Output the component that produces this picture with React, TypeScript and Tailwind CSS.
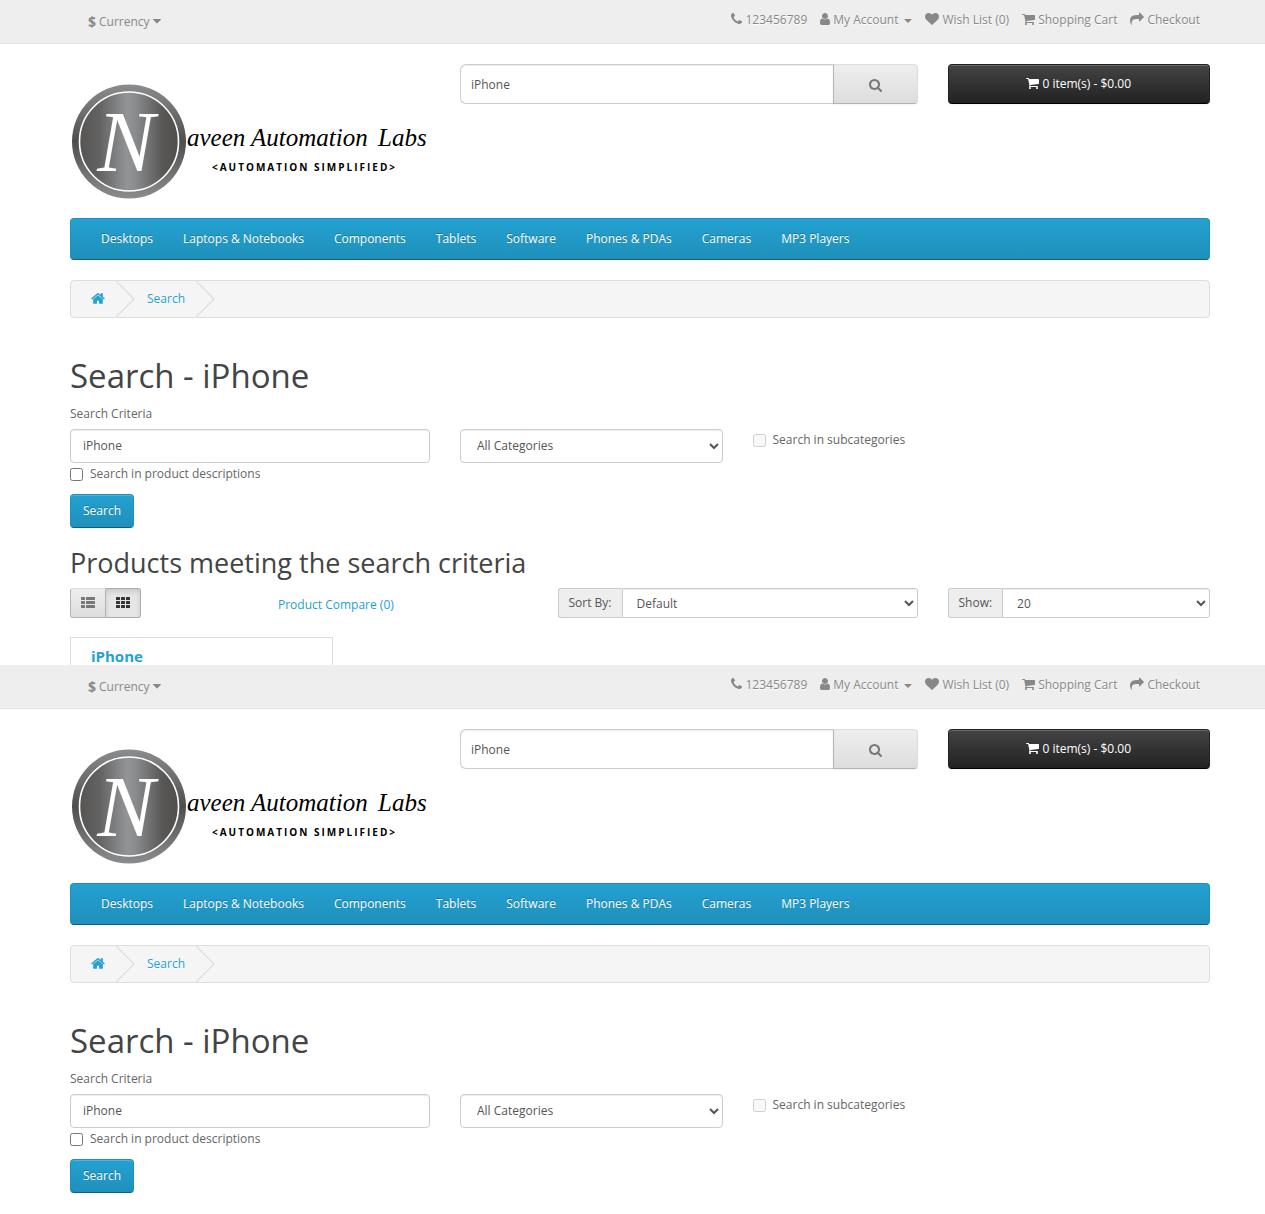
import React, { useId } from "react";

const ICONS = {
  phone: {
    x: 192,
    w: 1408,
    size: "h-[14px] w-[11px]",
    d: "M1600 1240q0 27-10 70.5t-21 68.5q-21 50-122 106-94 51-186 51-27 0-52.5-3.5t-57.5-12.5-47.5-14.5-55.5-20.5-49-18q-98-35-175-83-128-79-264.5-215.5t-215.5-264.5q-48-77-83-175-3-9-18-49t-20.5-55.5-14.5-47.5-12.5-57.5-3.5-52.5q0-92 51-186 56-101 106-122 25-11 68.5-21t70.5-10q14 0 21 3 18 6 53 76 11 19 30 54t35 63.5 31 53.5q3 4 17.5 25t21.5 35.5 7 28.5q0 20-28.5 50t-62 55-62 53-28.5 46q0 9 5 22.5t8.5 20.5 14 24 11.5 19q76 137 174 235t235 174q2 1 19 11.5t24 14 20.5 8.5 22.5 5q18 0 46-28.5t53-62 55-62 50-28.5q14 0 28.5 7t35.5 21.5 25 17.5q25 15 53.5 31t63.5 35 54 30q70 35 76 53 3 7 3 21z",
  },
  user: {
    x: 256,
    w: 1280,
    size: "h-[14px] w-[10px]",
    d: "M1536 1399q0 109-62.5 187t-150.5 78h-854q-88 0-150.5-78t-62.5-187q0-85 8.5-160.5t31.5-152 58.5-131 94-89 134.5-34.5q131 128 313 128t313-128q76 0 134.5 34.5t94 89 58.5 131 31.5 152 8.5 160.5zm-256-887q0 159-112.5 271.5t-271.5 112.5-271.5-112.5-112.5-271.5 112.5-271.5 271.5-112.5 271.5 112.5 112.5 271.5z",
  },
  heart: {
    x: 0,
    w: 1792,
    size: "h-[14px] w-[14px]",
    d: "M896 1664q-26 0-44-18l-624-602q-10-8-27.5-26t-55.5-65.5-68-97.5-53.5-121-23.5-138q0-220 127-344t351-124q62 0 126.5 21.5t120 58 95.5 68.5 76 68q36-36 76-68t95.5-68.5 120-58 126.5-21.5q224 0 351 124t127 344q0 221-229 450l-623 600q-18 18-44 18z",
  },
  cart: {
    x: 64,
    w: 1664,
    size: "h-[14px] w-[13px]",
    d: "M704 1536q0 52-38 90t-90 38-90-38-38-90 38-90 90-38 90 38 38 90zm896 0q0 52-38 90t-90 38-90-38-38-90 38-90 90-38 90 38 38 90zm128-1088v512q0 24-16.5 42.5t-40.5 21.5l-1044 122q13 60 13 70 0 16-24 64h920q26 0 45 19t19 45-19 45-45 19h-1024q-26 0-45-19t-19-45q0-11 8-31.5t16-36 21.5-40 15.5-29.5l-177-823h-204q-26 0-45-19t-19-45 19-45 45-19h256q16 0 28.5 6.5t19.5 15.5 13 24.5 8 26 5.5 29.5 4.5 26h1201q26 0 45 19t19 45z",
  },
  share: {
    x: 0,
    w: 1792,
    size: "h-[14px] w-[14px]",
    d: "M1792 640q0 26-19 45l-512 512q-19 19-45 19t-45-19-19-45v-256h-224q-98 0-175.5 6t-154 21.5-133 42.5-105.5 69.5-80 101-48.5 138.5-17.5 181q0 55 5 123 0 6 2.5 23.5t2.5 26.5q0 15-8.5 25t-23.5 10q-16 0-28-17-7-9-13-22t-13.5-30-10.5-24q-127-285-127-451 0-199 53-333 162-403 875-403h224v-256q0-26 19-45t45-19 45 19l512 512q19 19 19 45z",
  },
  search: {
    x: 64,
    w: 1664,
    size: "h-[14px] w-[13px]",
    d: "M1216 832q0-185-131.5-316.5t-316.5-131.5-316.5 131.5-131.5 316.5 131.5 316.5 316.5 131.5 316.5-131.5 131.5-316.5zm512 832q0 52-38 90t-90 38q-54 0-90-38l-343-342q-179 124-399 124-143 0-273.5-55.5t-225-150-150-225-55.5-273.5 55.5-273.5 150-225 225-150 273.5-55.5 273.5 55.5 225 150 150 225 55.5 273.5q0 220-124 399l343 343q37 37 37 90z",
  },
  home: {
    x: 64,
    w: 1664,
    size: "h-[15px] w-[14px]",
    d: "M1472 992v480q0 26-19 45t-45 19h-384v-384h-256v384h-384q-26 0-45-19t-19-45v-480q0-1 .5-3t.5-3l575-474 575 474q1 2 1 6zm223-69l-62 74q-8 9-21 11h-3q-13 0-21-7l-692-577-692 577q-12 8-24 7-13-2-21-11l-62-74q-8-10-7-23.5t11-21.5l719-599q32-26 76-26t76 26l244 204v-195q0-14 9-23t23-9h192q14 0 23 9t9 23v408l219 182q10 8 11 21.5t-7 23.5z",
  },
  caret: {
    x: 384,
    w: 1024,
    size: "h-[14px] w-[8px]",
    d: "M1408 704q0 26-19 45l-448 448q-19 19-45 19t-45-19l-448-448q-19-19-19-45t19-45 45-19h896q26 0 45 19t19 45z",
  },
};

function Icon({ name }: { name: keyof typeof ICONS }) {
  const icon = ICONS[name];
  return (
    <svg
      aria-hidden="true"
      viewBox={`${icon.x} 0 ${icon.w} 1792`}
      className={`mb-[2px] shrink-0 overflow-visible fill-current ${icon.size}`}
    >
      <path d={icon.d} />
    </svg>
  );
}

function ListIcon() {
  return (
    <svg aria-hidden="true" viewBox="0 0 14 11" className="h-[11px] w-[14px] fill-current">
      {[0, 4, 8].map((y) => (
        <g key={y}>
          <rect x="0" y={y} width="4" height="3" rx="0.5" />
          <rect x="5" y={y} width="9" height="3" rx="0.5" />
        </g>
      ))}
    </svg>
  );
}

function GridIcon() {
  return (
    <svg aria-hidden="true" viewBox="0 0 14 11" className="h-[11px] w-[14px] fill-current">
      {[0, 4, 8].map((y) => (
        <g key={y}>
          <rect x="0" y={y} width="4" height="3" rx="0.5" />
          <rect x="5" y={y} width="4" height="3" rx="0.5" />
          <rect x="10" y={y} width="4" height="3" rx="0.5" />
        </g>
      ))}
    </svg>
  );
}

function Logo() {
  const id = useId();
  return (
    <svg viewBox="0 0 360 136" className="block w-full max-w-[360px]" role="img" aria-label="naveenopencart">
      <defs>
        <linearGradient id={`${id}-disc`}>
          <stop offset="0" stopColor="#555453" />
          <stop offset="0.2" stopColor="#636262" />
          <stop offset="0.48" stopColor="#939496" />
          <stop offset="0.56" stopColor="#8b8c8e" />
          <stop offset="0.85" stopColor="#575655" />
          <stop offset="1" stopColor="#504f4e" />
        </linearGradient>
        <linearGradient id={`${id}-rim`} x1="0" y1="0" x2="0" y2="1">
          <stop offset="0" stopColor="#8b8c8e" />
          <stop offset="0.5" stopColor="#4f4e4d" />
          <stop offset="1" stopColor="#8b8c8e" />
        </linearGradient>
      </defs>
      <circle cx="59" cy="77.5" r="57" fill={`url(#${id}-rim)`} />
      <circle cx="59" cy="77.5" r="49.5" fill={`url(#${id}-disc)`} stroke="#fff" strokeWidth="1.6" />
      <text
        x="56"
        y="107"
        textAnchor="middle"
        className="fill-white font-['Liberation_Serif',serif] text-[86px] italic"
      >
        N
      </text>
      <g className="fill-black font-['Liberation_Serif',serif] text-[25px] italic">
        <text x="117" y="82">aveen</text>
        <text x="181" y="82">Automation</text>
        <text x="308" y="82">Labs</text>
      </g>
      <text
        x="142"
        y="107"
        className="fill-black font-['Open_Sans',sans-serif] text-[10px] font-bold tracking-[2px]"
      >
        &lt;AUTOMATION SIMPLIFIED&gt;
      </text>
    </svg>
  );
}

function Chevron() {
  return (
    <svg aria-hidden="true" viewBox="0 0 19 36" className="h-9 w-[19px] shrink-0">
      <path d="M0 0 L18 18 L0 36" fill="none" stroke="#ddd" strokeWidth="1.2" />
    </svg>
  );
}

const MENU = [
  "Desktops",
  "Laptops & Notebooks",
  "Components",
  "Tablets",
  "Software",
  "Phones & PDAs",
  "Cameras",
  "MP3 Players",
];

function Container({ children }: { children: React.ReactNode }) {
  return <div className="pr-[55px] pl-[70px]">{children}</div>;
}

function TopBar() {
  return (
    <nav className="border-b border-[#e2e2e2] bg-[#eee] text-[#888] [text-shadow:0_1px_0_#fff]">
      <Container>
        <div className="flex h-[43px] items-start justify-between pr-[10px] pl-[18px]">
          <button type="button" className="mt-3 flex items-center gap-[3px] leading-5">
            <strong className="text-[14px]">$</strong>
            <span>Currency</span>
            <Icon name="caret" />
          </button>
          <div className="mt-[10px] flex items-center gap-[13px] leading-5">
            <span className="flex items-center gap-[3px]">
              <a href="#contact" aria-label="Contact us">
                <Icon name="phone" />
              </a>
              <span>123456789</span>
            </span>
            <a href="#account" className="flex items-center gap-[3px]">
              <Icon name="user" />
              <span>My Account</span>
              <svg aria-hidden="true" viewBox="0 0 8 4" className="mt-px ml-[3px] h-1 w-2 fill-current">
                <path d="M0 0h8L4 4z" />
              </svg>
            </a>
            <a href="#wishlist" className="flex items-center gap-[3px]">
              <Icon name="heart" />
              <span>Wish List (0)</span>
            </a>
            <a href="#cart" className="flex items-center gap-[3px]">
              <Icon name="cart" />
              <span>Shopping Cart</span>
            </a>
            <a href="#checkout" className="flex items-center gap-[3px]">
              <Icon name="share" />
              <span>Checkout</span>
            </a>
          </div>
        </div>
      </Container>
    </nav>
  );
}

function Header() {
  return (
    <header className="grid grid-cols-12 gap-x-[30px] pt-5">
      <a href="#home" className="col-span-4">
        <Logo />
      </a>
      <div className="col-span-5 flex h-10">
        <input
          type="text"
          aria-label="Search store"
          defaultValue="iPhone"
          className="min-w-0 flex-1 rounded-l-md border border-r-0 border-[#ccc] bg-white px-[10px] pt-[2px] text-[#555] shadow-[inset_0_1px_1px_rgba(0,0,0,0.075)] outline-none"
        />
        <button
          type="button"
          aria-label="Search"
          className="flex w-[85px] items-center justify-center rounded-r border border-[#ddd] border-b-[#b3b3b3] border-l-[#b3b3b3] bg-linear-to-b from-[#eee] to-[#ddd] pt-1 text-[#777] shadow-[0_1px_2px_rgba(0,0,0,0.05)]"
        >
          <Icon name="search" />
        </button>
      </div>
      <div className="col-span-3">
        <button
          type="button"
          className="flex h-10 w-full items-center justify-center gap-[3px] rounded border border-[#222] border-b-black bg-linear-to-b from-[#444] to-[#222] text-white shadow-[inset_0_1px_0_rgba(255,255,255,0.2),0_1px_2px_rgba(0,0,0,0.05)]"
        >
          <Icon name="cart" />
          <span>0 item(s) - $0.00</span>
        </button>
      </div>
    </header>
  );
}

function Menu() {
  return (
    <nav className="mt-[18px] flex h-[42px] items-center gap-[30px] rounded border border-[#1f90bb] border-b-[#145e7a] bg-linear-to-b from-[#23a1d1] to-[#1f90bb] px-[30px] text-white [text-shadow:0_-1px_0_rgba(0,0,0,0.25)]">
      {MENU.map((item) => (
        <a key={item} href="#category">
          {item}
        </a>
      ))}
    </nav>
  );
}

function Breadcrumb() {
  return (
    <nav
      aria-label="Breadcrumb"
      className="mt-5 flex h-[38px] items-center rounded border border-[#ddd] bg-[#f5f5f5] pl-5 text-[#23a1d1] [text-shadow:0_1px_0_#fff]"
    >
      <a href="#home" aria-label="Home" className="mr-[11px]">
        <Icon name="home" />
      </a>
      <Chevron />
      <a href="#search" className="mr-[11px] ml-[12px]">
        Search
      </a>
      <Chevron />
    </nav>
  );
}

function SearchForm() {
  const id = useId();
  return (
    <form onSubmit={(e) => e.preventDefault()}>
      <h1 className="mt-10 text-[33px] leading-9 text-[#444]">Search - iPhone</h1>
      <label htmlFor={`${id}-q`} className="mt-[10px] block leading-5">
        Search Criteria
      </label>
      <div className="mt-[5px] grid grid-cols-12 gap-x-[30px]">
        <input
          id={`${id}-q`}
          type="text"
          defaultValue="iPhone"
          className="col-span-4 h-[34px] min-w-0 rounded border border-[#ccc] bg-white px-3 pb-[2px] text-[#555] shadow-[inset_0_1px_1px_rgba(0,0,0,0.075)] outline-none"
        />
        <select
          aria-label="Category"
          className="col-span-3 h-[34px] min-w-0 rounded border border-[#ccc] bg-white px-3 pb-[2px] text-[#555] shadow-[inset_0_1px_1px_rgba(0,0,0,0.075)]"
        >
          <option>All Categories</option>
        </select>
        <label className="col-span-3 flex h-[22px] items-center gap-[7px] leading-5">
          <input type="checkbox" disabled className="mt-px size-[13px]" />
          Search in subcategories
        </label>
      </div>
      <label className="flex h-[22px] items-center gap-[7px] leading-5">
        <input type="checkbox" className="mt-px size-[13px]" />
        Search in product descriptions
      </label>
      <button
        type="submit"
        className="mt-[9px] block h-[34px] rounded border border-[#1f90bb] border-b-[#145e7a] bg-linear-to-b from-[#23a1d1] to-[#1f90bb] px-3 text-white shadow-[inset_0_1px_0_rgba(255,255,255,0.2),0_1px_2px_rgba(0,0,0,0.05)] [text-shadow:0_-1px_0_rgba(0,0,0,0.25)]"
      >
        Search
      </button>
    </form>
  );
}

function AddonSelect({ label, value }: { label: string; value: string }) {
  const id = useId();
  return (
    <div className="flex h-[30px]">
      <label
        htmlFor={id}
        className="flex items-center rounded-l-[3px] border border-r-0 border-[#ccc] bg-[#eee] px-[10px] pb-px text-[#555]"
      >
        {label}
      </label>
      <select
        id={id}
        className="min-w-0 flex-1 rounded-r-[3px] border border-[#ccc] bg-white px-[10px] text-[#555] shadow-[inset_0_1px_1px_rgba(0,0,0,0.075)]"
      >
        <option>{value}</option>
      </select>
    </div>
  );
}

function Results() {
  return (
    <section>
      <h2 className="mt-5 text-[27px] leading-[30px] text-[#444]">Products meeting the search criteria</h2>
      <div className="mt-[10px] grid grid-cols-12 gap-x-[30px]">
        <div className="col-span-2 flex h-[30px]">
          <button
            type="button"
            aria-label="List"
            className="flex w-9 items-center justify-center rounded-l-[3px] border border-[#ddd] border-r-[#b3b3b3] border-b-[#b3b3b3] border-l-[#b3b3b3] bg-linear-to-b from-[#eee] to-[#ddd] pb-px text-[#777]"
          >
            <ListIcon />
          </button>
          <button
            type="button"
            aria-label="Grid"
            aria-pressed="true"
            className="flex w-[35px] items-center justify-center rounded-r-[3px] border border-l-0 border-[#adadad] bg-[#e6e6e6] pb-px text-[#333] shadow-[inset_0_3px_5px_rgba(0,0,0,0.125)]"
          >
            <GridIcon />
          </button>
        </div>
        <a href="#compare" className="col-span-3 pt-[7px] pl-[13px] leading-5 text-[#23a1d1]">
          Product Compare (0)
        </a>
        <div className="col-span-4">
          <AddonSelect label="Sort By:" value="Default" />
        </div>
        <div className="col-span-3">
          <AddonSelect label="Show:" value="20" />
        </div>
      </div>
      <div className="mt-[19px] grid grid-cols-12 gap-x-[30px]">
        <article className="col-span-3 border border-b-0 border-[#ddd] px-5 pt-[10px]">
          <h4 className="text-[15px] leading-[17px] font-bold text-[#23a1d1]">
            <a href="#iphone">iPhone</a>
          </h4>
        </article>
      </div>
    </section>
  );
}

function Screen({ results = false }: { results?: boolean }) {
  return (
    <div>
      <TopBar />
      <Container>
        <Header />
        <Menu />
        <Breadcrumb />
        <SearchForm />
        {results && <Results />}
      </Container>
    </div>
  );
}

export default function App() {
  return (
    <div className="bg-white pb-[21px] font-['Open_Sans',sans-serif] text-[12px] leading-5 text-[#666]">
      <Screen results />
      <Screen />
    </div>
  );
}
